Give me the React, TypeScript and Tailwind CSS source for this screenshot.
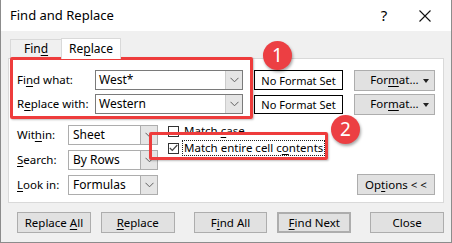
import React from "react";

const U = ({ children }: { children: React.ReactNode }) => (
  <span className="underline underline-offset-2 decoration-[1px]">{children}</span>
);

const Chevron = () => (
  <svg width="9" height="6" viewBox="0 0 9 6" className="block">
    <path d="M0.5 0.8 L4.5 4.8 L8.5 0.8" fill="none" stroke="#606060" strokeWidth="1" />
  </svg>
);

function Combo({ text, w }: { text: string; w: string }) {
  return (
    <div className={`${w} h-[20px] flex border border-[#7a7a7a] bg-white`}>
      <div className="flex-1 flex items-center pl-[3px] text-black text-[12px]">{text}</div>
      <div className="w-[17px] flex items-center justify-center bg-[#e5e5e5] border-l border-[#cccccc]">
        <Chevron />
      </div>
    </div>
  );
}

function Select({ text }: { text: string }) {
  return (
    <div className="w-[90px] h-[20px] flex border border-[#adadad] bg-white">
      <div className="flex-1 flex items-center pl-[4px] text-black text-[12px]">{text}</div>
      <div className="w-[17px] flex items-center justify-center bg-[#e5e5e5] border-l border-[#adadad]">
        <Chevron />
      </div>
    </div>
  );
}

function Btn({ children, className = "" }: { children: React.ReactNode; className?: string }) {
  return (
    <div
      className={`h-[21px] flex items-center justify-center bg-[#e1e1e1] border border-[#adadad] text-black ${className}`}
    >
      <span>{children}</span>
    </div>
  );
}

function Badge({ n, className }: { n: string; className: string }) {
  return (
    <div
      className={`absolute w-[29px] h-[29px] rounded-full bg-[#ec3f43] text-white flex items-center justify-center text-[19px] shadow-[1px_2px_3px_rgba(0,0,0,0.35)] ${className}`}
    >
      {n}
    </div>
  );
}

const Tri = () => (
  <span className="absolute right-[5px] top-[8px] w-0 h-0 border-l-[3px] border-r-[3px] border-t-[4px] border-l-transparent border-r-transparent border-t-[#222]" />
);

export default function App() {
  return (
    <div
      className="relative w-[452px] h-[243px] flex flex-col border-l border-r border-b border-[#8c8c8c] text-[11.5px] leading-none text-black overflow-hidden"
      style={{ fontFamily: '"Noto Sans", "Open Sans", sans-serif' }}
    >
      {/* title bar */}
      <div className="h-[31px] bg-white flex items-center pl-[9px] shrink-0">
        <div className="text-[13px] flex-1">Find and Replace</div>
        <div className="w-[20px] text-center text-[15px] mr-[25px]">?</div>
        <svg width="12" height="12" viewBox="0 0 12 12" className="mr-[20px]">
          <path d="M0.5 0.5 L11.5 11.5 M11.5 0.5 L0.5 11.5" stroke="#111" strokeWidth="1.1" />
        </svg>
      </div>

      {/* body */}
      <div className="flex-1 bg-[#f0f0f0] px-[7px] flex flex-col">
        {/* tabs */}
        <div className="flex items-end h-[27px] pl-[2px]">
          <div className="w-[51px] h-[19px] flex items-center justify-center border-t border-l border-[#d9d9d9] bg-[#f0f0f0] text-[12px]">
            <span>Fin<U>d</U></span>
          </div>
          <div className="w-[60px] h-[21px] flex items-center justify-center border-t border-l border-r border-[#d9d9d9] bg-white relative top-[1px] z-10 text-[12px]">
            <span>Re<U>p</U>lace</span>
          </div>
        </div>

        {/* panel */}
        <div className="h-[145px] bg-white border border-[#d9d9d9] pl-[8px] pt-[11px] flex flex-col">
          <div className="flex items-center h-[20px]">
            <div className="w-[78px]">Fi<U>n</U>d what:</div>
            <Combo text="West*" w="w-[148px]" />
            <div className="ml-[11px] w-[89px] h-[20px] border border-black flex items-center justify-center text-[11px]">No Format Set</div>
            <Btn className="ml-[11px] w-[81px] h-[20px] relative">
              For<U>m</U>at...
              <Tri />
            </Btn>
          </div>
          <div className="flex items-center h-[20px] mt-[4px]">
            <div className="w-[78px]">R<U>e</U>place with:</div>
            <Combo text="Western" w="w-[148px]" />
            <div className="ml-[11px] w-[89px] h-[19px] border border-black flex items-center justify-center text-[11px]">No Format Set</div>
            <Btn className="ml-[11px] w-[81px] h-[19px] relative">
              For<U>m</U>at...
              <Tri />
            </Btn>
          </div>

          <div className="flex mt-[11px]">
            <div className="flex flex-col">
              <div className="flex items-center h-[20px]">
                <div className="w-[51px]">Wit<U>h</U>in:</div>
                <Select text="Sheet" />
              </div>
              <div className="flex items-center h-[20px] mt-[5px]">
                <div className="w-[51px]"><U>S</U>earch:</div>
                <Select text="By Rows" />
              </div>
              <div className="flex items-center h-[20px] mt-[5px]">
                <div className="w-[51px]"><U>L</U>ook in:</div>
                <Select text="Formulas" />
              </div>
            </div>
            <div className="flex flex-col ml-[10px]">
              <div className="flex items-center h-[12px]">
                <div className="w-[11px] h-[11px] border border-[#333] bg-white" />
                <div className="ml-[5px]">Match <U>c</U>ase</div>
              </div>
              <div className="flex items-center h-[16px] mt-[3px]">
                <div className="w-[11px] h-[11px] border border-[#333] bg-white flex items-center justify-center">
                  <svg width="9" height="8" viewBox="0 0 9 8">
                    <path d="M0.8 4 L3.3 6.5 L8.3 1" fill="none" stroke="#444" strokeWidth="1.2" />
                  </svg>
                </div>
                <div className="ml-[3px] h-[16px] px-[1px] flex items-center border border-dotted border-[#222]">
                  <span>Match entire cell c<U>o</U>ntents</span>
                </div>
              </div>
            </div>
            <div className="flex-1 flex items-end justify-end pr-[8px]">
              <Btn className="w-[78px] h-[20px]">Op<U>t</U>ions &lt; &lt;</Btn>
            </div>
          </div>
        </div>

        {/* bottom buttons */}
        <div className="flex items-center mt-[9px] pl-[9px]">
          <Btn className="w-[74px]">Replace <U>A</U>ll</Btn>
          <Btn className="w-[74px] ml-[10px]"><U>R</U>eplace</Btn>
          <Btn className="w-[74px] ml-[19px]">F<U>i</U>nd All</Btn>
          <Btn className="w-[74px] ml-[10px] border-2 border-[#0078d7]"><U>F</U>ind Next</Btn>
          <Btn className="w-[74px] ml-[19px]">Close</Btn>
        </div>
      </div>

      {/* annotations */}
      <div className="absolute left-[9px] top-[57px] w-[243px] h-[62px] border-[3px] border-[#ee3c3c] rounded-[2px] shadow-[1px_1px_2px_rgba(0,0,0,0.25)]" />
      <div className="absolute left-[148px] top-[132px] w-[179px] h-[28px] border-[3px] border-[#ee3c3c] rounded-[2px] shadow-[1px_1px_2px_rgba(0,0,0,0.25)]" />
      <Badge n="1" className="left-[262px] top-[41px]" />
      <Badge n="2" className="left-[330px] top-[115px]" />
    </div>
  );
}
